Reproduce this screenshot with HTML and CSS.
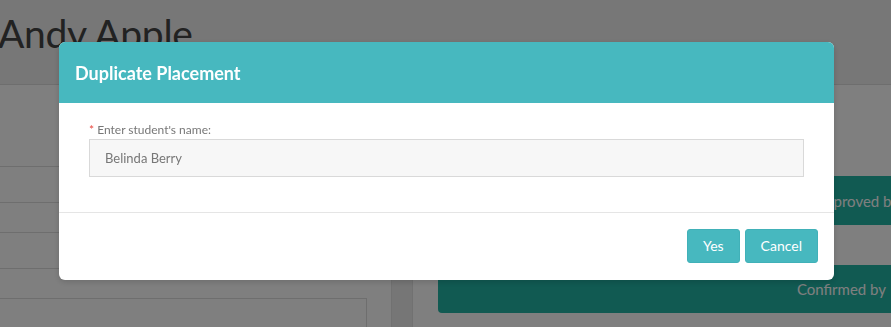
FILE: index.html
```html
<!DOCTYPE html>
<html lang="en">
<head>
<meta charset="utf-8">
<title>Duplicate Placement</title>
<link rel="stylesheet" href="styles.css">
</head>
<body>
  <div class="page">
    <header class="page-header">
      <h1 class="page-title">Andy Apple</h1>
    </header>
    <main class="page-main">
      <section class="left-col">
        <div class="list-row list-row--tall"></div>
        <div class="list-row list-row--a"></div>
        <div class="list-row list-row--b"></div>
        <div class="list-row list-row--a"></div>
        <div class="summary-box"></div>
      </section>
      <div class="gutter"></div>
      <section class="right-col">
        <div class="status status--approved"><span>Approved by Administrator</span></div>
        <div class="status status--confirmed"><span>Confirmed by</span></div>
      </section>
    </main>
  </div>

  <div class="overlay"></div>

  <div class="modal-layer">
    <div class="modal" role="dialog" aria-labelledby="modal-title">
      <div class="modal-header">
        <h2 class="modal-title" id="modal-title">Duplicate Placement</h2>
      </div>
      <div class="modal-body">
        <label class="field-label" for="student"><span class="required">*</span> Enter student's name:</label>
        <input class="field-input" id="student" type="text" value="Belinda Berry">
      </div>
      <div class="modal-footer">
        <button class="btn">Yes</button>
        <button class="btn">Cancel</button>
      </div>
    </div>
  </div>
</body>
</html>
```

FILE: styles.css
```css
* { box-sizing: border-box; }

html, body {
  margin: 0;
  padding: 0;
  width: 891px;
  height: 327px;
  overflow: hidden;
  font-family: "Lato", "Open Sans", "Liberation Sans", sans-serif;
  background: #ffffff;
}

.page {
  width: 891px;
  height: 327px;
  display: flex;
  flex-direction: column;
  overflow: hidden;
}

.page-header {
  height: 85px;
  flex: none;
  background: #eeeeee;
  border-bottom: 1px solid #dcdcdc;
}

.page-title {
  margin: 0 0 0 -2px;
  padding: 9px 0 0 0;
  font-size: 39px;
  line-height: 48px;
  font-weight: 400;
  color: #444444;
  letter-spacing: -0.3px;
}

.page-main {
  flex: 1;
  display: flex;
  min-height: 0;
  overflow: hidden;
}

.left-col {
  width: 391px;
  flex: none;
  background: #ffffff;
  display: flex;
  flex-direction: column;
}

.list-row {
  border-bottom: 1px solid #dddddd;
  flex: none;
}
.list-row--tall { height: 82px; }
.list-row--a { height: 36px; }
.list-row--b { height: 30px; }

.summary-box {
  margin-top: 29px;
  width: 369px;
  margin-left: -2px;
  flex: 1;
  border: 1px solid #dddddd;
  border-bottom: none;
}

.gutter {
  width: 22px;
  flex: none;
  background: #ececec;
  border-left: 1px solid #e2e2e2;
  border-right: 1px solid #e2e2e2;
}

.right-col {
  flex: 1;
  padding: 91px 0 0 25px;
  display: flex;
  flex-direction: column;
  gap: 40px;
  overflow: hidden;
}

.status {
  height: 49px;
  width: 520px;
  flex: none;
  background: #22b4a5;
  border-radius: 4px;
  display: flex;
  align-items: center;
  color: #ffffff;
  font-size: 15px;
  white-space: nowrap;
}
.status--approved {
  padding-left: 377px;
}
.status--confirmed {
  height: 48px;
  justify-content: flex-end;
  padding-right: 72px;
}

.overlay {
  position: fixed;
  inset: 0;
  background: rgba(0, 0, 0, 0.5);
}

.modal-layer {
  position: fixed;
  inset: 0;
  padding: 42px 0 0 59px;
}

.modal {
  width: 775px;
  background: #ffffff;
  border-radius: 6px;
  overflow: hidden;
  box-shadow: 0 2px 6px rgba(0, 0, 0, 0.15);
}

.modal-header {
  height: 61px;
  background: #47b8bf;
  display: flex;
  align-items: center;
  padding: 0 16px;
}

.modal-title {
  margin: 0;
  font-size: 18px;
  font-weight: 700;
  color: #ffffff;
  line-height: 22px;
  padding-top: 1px;
}

.modal-body {
  padding: 18px 30px 35px;
  display: flex;
  flex-direction: column;
}

.field-label {
  font-size: 12px;
  line-height: 17px;
  color: #777777;
  margin-bottom: 1px;
}

.required {
  color: #e8473f;
}

.field-input {
  height: 38px;
  width: 100%;
  background: #f7f7f7;
  border: 1px solid #d9d9d9;
  padding: 0 15px;
  font-family: inherit;
  font-size: 13px;
  color: #777777;
  outline: none;
  border-radius: 0;
}

.modal-footer {
  border-top: 1px solid #e5e5e5;
  padding: 16px 16px 17px;
  display: flex;
  justify-content: flex-end;
  gap: 5px;
}

.btn {
  height: 34px;
  padding: 0 15px;
  background: #47b8bf;
  border: 1px solid #41b1b8;
  border-radius: 3px;
  color: #ffffff;
  font-family: inherit;
  font-size: 14px;
  line-height: 20px;
  cursor: pointer;
}
```
